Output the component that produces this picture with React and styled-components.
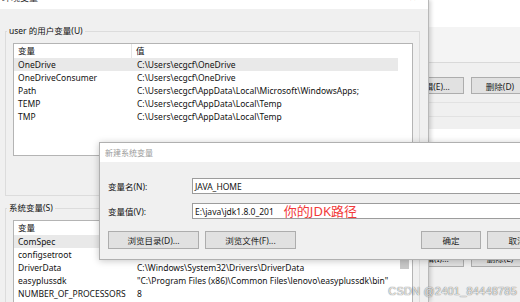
import React from "react";
import styled, { createGlobalStyle } from "styled-components";

const GlobalStyle = createGlobalStyle`
  html, body {
    margin: 0;
    padding: 0;
    background: #f0f0f0;
    overflow: hidden;
  }
  * {
    box-sizing: border-box;
  }
`;

const Desktop = styled.div`
  position: relative;
  width: 520px;
  height: 302px;
  overflow: hidden;
  background: #f0f0f0;
  font-family: "Noto Sans", "Noto Sans CJK SC", sans-serif;
  font-size: 8.5px;
  color: #111;
`;

/* window peeking out on the right, behind everything */
const BackWindow = styled.div`
  position: absolute;
  left: 380px;
  top: 0;
  width: 160px;
  height: 302px;
  z-index: 1;
  display: flex;
  flex-direction: column;
  background: #f0f0f0;
`;

const BackTop = styled.div`
  height: 27px;
  background: #fff;
`;

const BackBand = styled.div`
  height: 36px;
  background: #f4f4f4;
  border-bottom: 1px solid #d9d9d9;
`;

const BackButtons = styled.div`
  display: flex;
  gap: 7px;
  padding-left: 22px;
  margin-top: ${(p) => p.$top}px;
`;

const RuleRow = styled.div`
  height: ${(p) => p.$h}px;
  border-bottom: 1px solid #e2e2e2;
`;

const WhiteBand = styled.div`
  height: 30px;
  margin-top: 12px;
  background: #fff;
`;

const WinButton = styled.div`
  width: ${(p) => p.$w}px;
  height: ${(p) => p.$h || 18}px;
  flex: none;
  display: flex;
  align-items: center;
  justify-content: center;
  background: #e1e1e1;
  border: 1px solid #adadad;
  font-size: 8.5px;
  color: #1a1a1a;
  white-space: nowrap;
`;

/* environment variables window */
const EnvWindow = styled.div`
  position: absolute;
  left: 0;
  top: 0;
  width: 429px;
  height: 302px;
  z-index: 2;
  display: flex;
  flex-direction: column;
  background: #f0f0f0;
  border-right: 1px solid #b8b8b8;
  box-shadow: 2px 0 4px rgba(0, 0, 0, 0.16);
`;

const TitleBar = styled.div`
  height: 9px;
  flex: none;
  display: flex;
  justify-content: space-between;
  align-items: flex-end;
  padding: 0 11px 0 2px;
  background: #fff;
  overflow: hidden;
`;

const TitleText = styled.span`
  font-size: 9px;
  line-height: 12px;
  margin-bottom: 5px;
  color: #333;
`;

const Body = styled.div`
  display: flex;
  flex-direction: column;
  padding: 0 0 0 5px;
`;

const Group = styled.fieldset`
  width: 415px;
  margin: ${(p) => p.$top}px 0 0 0;
  padding: 5px 6px ${(p) => p.$bottom}px 7px;
  border: 1px solid #dcdcdc;
  min-width: 0;
`;

const Legend = styled.legend`
  margin-left: -6px;
  padding: 0 2px;
  line-height: 14px;
  font-size: 8.5px;
  color: #111;
`;

const ListBox = styled.div`
  display: flex;
  height: ${(p) => p.$h}px;
  background: #fff;
  border: 1px solid #b4b4b4;
  overflow: hidden;
`;

const ListRows = styled.div`
  flex: 1;
  display: flex;
  flex-direction: column;
`;

const HeaderRow = styled.div`
  display: grid;
  grid-template-columns: 118px 1fr;
  height: 14px;
  line-height: 14px;
  flex: none;
`;

const HeaderCell = styled.div`
  padding-left: 4px;
  border-right: ${(p) => (p.$divider ? "1px solid #e5e5e5" : "none")};
`;

const Row = styled.div`
  display: grid;
  grid-template-columns: 119px 1fr;
  height: 13px;
  line-height: 13px;
  flex: none;
  background: ${(p) => (p.$selected ? "#e9e9e9" : "transparent")};
  white-space: nowrap;
`;

const Cell = styled.div`
  padding-left: 4px;
  overflow: hidden;
`;

const Gutter = styled.div`
  width: 14px;
  flex: none;
  padding: ${(p) => (p.$thumb ? "15px 3px 0 2px" : "0")};
`;

const Thumb = styled.div`
  height: 33px;
  background: #c8c8c8;
`;

/* 新建系统变量 dialog */
const Dialog = styled.div`
  position: absolute;
  left: 99px;
  top: 142px;
  width: 458px;
  height: 118px;
  z-index: 3;
  display: flex;
  flex-direction: column;
  background: #f0f0f0;
  border: 1px solid #b0b0b0;
  box-shadow: 0 1px 7px rgba(0, 0, 0, 0.22);
`;

const DialogTitle = styled.div`
  height: 19px;
  flex: none;
  display: flex;
  align-items: center;
  padding-left: 5px;
  background: #fff;
  font-size: 8px;
  color: #9a9a9a;
`;

const DialogBody = styled.div`
  display: flex;
  flex-direction: column;
  gap: 9px;
  padding: 16px 9px 0 8px;
`;

const FieldRow = styled.div`
  display: grid;
  grid-template-columns: 84px 1fr;
  align-items: center;
`;

const Label = styled.span`
  font-size: 8.5px;
`;

const Input = styled.div`
  height: 16px;
  display: flex;
  align-items: center;
  padding-left: 2px;
  background: #fff;
  border: 1px solid #9c9c9c;
  white-space: nowrap;
  overflow: visible;
`;

const Note = styled.span`
  margin-left: 10px;
  font-size: 13px;
  line-height: 14px;
  color: #f23a3a;
`;

const ButtonRow = styled.div`
  display: flex;
  justify-content: space-between;
  margin-top: 3px;
`;

const ButtonGroup = styled.div`
  display: flex;
  gap: ${(p) => p.$gap}px;
`;

const Watermark = styled.div`
  position: absolute;
  right: 3px;
  bottom: 5px;
  z-index: 4;
  font-family: "Liberation Sans", Arial, sans-serif;
  font-size: 11px;
  letter-spacing: 0.2px;
  color: rgba(255, 255, 255, 0.85);
  text-shadow: 0 0 1px rgba(0, 0, 0, 0.55), 0 0 1px rgba(0, 0, 0, 0.35);
`;

const userVars = [
  ["OneDrive", "C:\\Users\\ecgcf\\OneDrive"],
  ["OneDriveConsumer", "C:\\Users\\ecgcf\\OneDrive"],
  ["Path", "C:\\Users\\ecgcf\\AppData\\Local\\Microsoft\\WindowsApps;"],
  ["TEMP", "C:\\Users\\ecgcf\\AppData\\Local\\Temp"],
  ["TMP", "C:\\Users\\ecgcf\\AppData\\Local\\Temp"],
];

// the first two values sit under the dialog, so they stay empty
const systemVars = [
  ["ComSpec", ""],
  ["configsetroot", ""],
  ["DriverData", "C:\\Windows\\System32\\Drivers\\DriverData"],
  ["easyplussdk", '"C:\\Program Files (x86)\\Common Files\\lenovo\\easyplussdk\\bin"'],
  ["NUMBER_OF_PROCESSORS", "8"],
];

const VarList = ({ rows, height, thumb }) => (
  <ListBox $h={height}>
    <ListRows>
      <HeaderRow>
        <HeaderCell $divider>变量</HeaderCell>
        <HeaderCell>值</HeaderCell>
      </HeaderRow>
      {rows.map(([name, value], i) => (
        <Row key={name} $selected={i === 0}>
          <Cell>{name}</Cell>
          <Cell>{value}</Cell>
        </Row>
      ))}
    </ListRows>
    <Gutter $thumb={thumb}>{thumb && <Thumb />}</Gutter>
  </ListBox>
);

const App = () => {
  return (
    <>
      <GlobalStyle />
      <Desktop>
        <BackWindow>
          <BackTop />
          <BackBand />
          <BackButtons $top={14}>
            <WinButton $w={62} $h={17}>编辑(E)...</WinButton>
            <WinButton $w={58} $h={17}>删除(D)</WinButton>
          </BackButtons>
          <RuleRow $h={9} />
          <RuleRow $h={14} />
          <WhiteBand />
          <BackButtons $top={90}>
            <WinButton $w={62}>编辑(I)...</WinButton>
            <WinButton $w={58}>删除(L)</WinButton>
          </BackButtons>
        </BackWindow>

        <EnvWindow>
          <TitleBar>
            <TitleText>环境变量</TitleText>
            <TitleText>✕</TitleText>
          </TitleBar>
          <Body>
            <Group $top={15} $bottom={39}>
              <Legend>user 的用户变量(U)</Legend>
              <VarList rows={userVars} height={113} />
            </Group>
            <Group $top={5} $bottom={0}>
              <Legend>系统变量(S)</Legend>
              <VarList rows={systemVars} height={100} thumb />
            </Group>
          </Body>
        </EnvWindow>

        <Dialog>
          <DialogTitle>新建系统变量</DialogTitle>
          <DialogBody>
            <FieldRow>
              <Label>变量名(N):</Label>
              <Input>JAVA_HOME</Input>
            </FieldRow>
            <FieldRow>
              <Label>变量值(V):</Label>
              <Input>
                E:\java\jdk1.8.0_201
                <Note>你的JDK路径</Note>
              </Input>
            </FieldRow>
            <ButtonRow>
              <ButtonGroup $gap={6}>
                <WinButton $w={91}>浏览目录(D)...</WinButton>
                <WinButton $w={91}>浏览文件(F)...</WinButton>
              </ButtonGroup>
              <ButtonGroup $gap={6}>
                <WinButton $w={60}>确定</WinButton>
                <WinButton $w={60}>取消</WinButton>
              </ButtonGroup>
            </ButtonRow>
          </DialogBody>
        </Dialog>

        <Watermark>CSDN @2401_84448785</Watermark>
      </Desktop>
    </>
  );
};

export default App;
